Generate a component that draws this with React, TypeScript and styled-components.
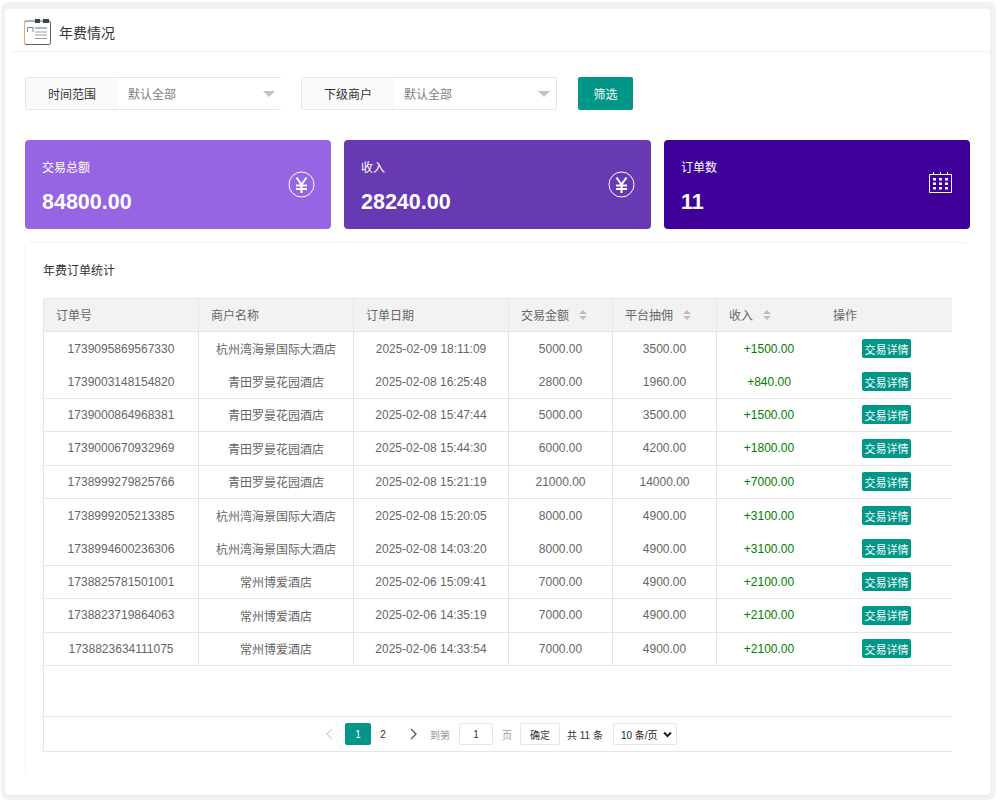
import React from "react";
import styled, { createGlobalStyle } from "styled-components";

const FONT_STACK = `"Liberation Sans", "Noto Sans CJK SC", sans-serif`;
const COLUMNS = "155px 155px 155px 104px 104px 104px 131px";

const GlobalStyle = createGlobalStyle`
  html, body {
    margin: 0;
    padding: 0;
    background: #ffffff;
    font-family: ${FONT_STACK};
  }
  * {
    box-sizing: border-box;
  }
`;

const Shell = styled.div`
  width: 995px;
  height: 798px;
  margin: 2px 0 0 1px;
  padding: 7px 6px 5px 4px;
  background: #f2f2f2;
  border-radius: 8px;
`;

const Panel = styled.div`
  height: 100%;
  padding: 0 0 0 7px;
  background: #ffffff;
  border-radius: 4px;
  box-shadow: 0 1px 2px rgba(0, 0, 0, 0.05);
`;

const PageHeader = styled.div`
  height: 43px;
  display: flex;
  align-items: center;
  gap: 8px;
  padding: 3px 0 0 12px;
  border-bottom: 1px solid #f2f2f2;
  font-size: 14px;
  color: #333333;
`;

const FilterBar = styled.div`
  display: flex;
  margin: 25px 0 0 13px;
  height: 33px;
`;

const FilterGroup = styled.div<{ $open?: boolean }>`
  width: 256px;
  height: 33px;
  display: flex;
  margin-right: 20px;
  border: 1px solid #e6e6e6;
  border-right-width: ${(p) => (p.$open ? "0" : "1px")};
  border-radius: 2px;
  font-size: 12px;
`;

const FilterLabel = styled.div`
  width: 92px;
  display: flex;
  align-items: center;
  justify-content: center;
  background: #fafafa;
  color: #333333;
`;

const FilterValue = styled.div`
  flex: 1;
  display: flex;
  align-items: center;
  justify-content: space-between;
  padding: 0 6px 0 10px;
  color: #808080;
`;

const Caret = styled.span`
  width: 0;
  height: 0;
  border-left: 6px solid transparent;
  border-right: 6px solid transparent;
  border-top: 6px solid #c2c2c2;
`;

const FilterButton = styled.button`
  width: 55px;
  height: 33px;
  margin-left: 1px;
  padding: 0;
  border: 0;
  border-radius: 2px;
  background: #009688;
  color: #ffffff;
  font-family: inherit;
  font-size: 12px;
`;

const CardRow = styled.div`
  display: grid;
  grid-template-columns: 306px 307px 306px;
  gap: 13px;
  margin: 30px 0 0 13px;
  width: 945px;
`;

const StatCard = styled.div<{ $bg: string }>`
  height: 89px;
  display: flex;
  align-items: center;
  justify-content: space-between;
  padding: 0 16px 0 17px;
  border-radius: 4px;
  background: ${(p) => p.$bg};
  color: #ffffff;
`;

const StatText = styled.div`
  display: flex;
  flex-direction: column;
  gap: 12px;
  padding-top: 5px;
`;

const StatLabel = styled.div`
  font-size: 12px;
  line-height: 18px;
`;

const StatValue = styled.div`
  font-size: 21.5px;
  line-height: 27px;
  font-weight: 700;
`;

const CalendarSlot = styled.span`
  display: flex;
  margin: 0 2px 4px 0;
`;

const TableCard = styled.div`
  width: 945px;
  height: 536px;
  margin: 13px 0 0 13px;
  padding: 0 0 0 17px;
  border: 1px solid #f2f2f2;
  border-right-color: transparent;
  border-bottom-color: transparent;
  border-radius: 6px;
`;

const TableTitle = styled.div`
  height: 55px;
  display: flex;
  align-items: center;
  font-size: 12px;
  padding-bottom: 3px;
  color: #333333;
`;

const TableFrame = styled.div`
  width: 909px;
  height: 454px;
  display: flex;
  flex-direction: column;
  border: 1px solid #e6e6e6;
  border-right: 0;
  font-size: 12px;
  color: #666666;
`;

const HeadRow = styled.div`
  height: 33px;
  display: grid;
  grid-template-columns: ${COLUMNS};
  flex: none;
  background: #f2f2f2;
  border-bottom: 1px solid #e6e6e6;
`;

const HeadCell = styled.div<{ $edge?: boolean }>`
  display: flex;
  align-items: center;
  gap: 10px;
  padding: 0 0 1px 12px;
  border-right: ${(p) => (p.$edge ? "1px solid #e6e6e6" : "0")};
`;

const SortMark = styled.span`
  display: inline-flex;
  flex-direction: column;
  gap: 2px;
  margin-top: 1px;

  &::before,
  &::after {
    content: "";
    width: 0;
    height: 0;
    border-left: 4px solid transparent;
    border-right: 4px solid transparent;
  }
  &::before {
    border-bottom: 4px solid #bdbdbd;
  }
  &::after {
    border-top: 4px solid #bdbdbd;
  }
`;

const TableBody = styled.div`
  flex: 1;
  border-bottom: 1px solid #e6e6e6;
`;

const BodyRow = styled.div<{ $plain?: boolean }>`
  height: 33.4px;
  display: grid;
  grid-template-columns: ${COLUMNS};
  border-bottom: ${(p) => (p.$plain ? "0" : "1px solid #e6e6e6")};
`;

const BodyCell = styled.div<{ $edge?: boolean; $income?: boolean }>`
  display: flex;
  align-items: center;
  justify-content: center;
  border-right: ${(p) => (p.$edge ? "1px solid #e6e6e6" : "0")};
  color: ${(p) => (p.$income ? "#008000" : "#666666")};
`;

const DetailButton = styled.span`
  width: 49px;
  height: 19px;
  display: flex;
  align-items: center;
  justify-content: center;
  border-radius: 2px;
  background: #009688;
  color: #ffffff;
  font-size: 11px;
`;

const Pager = styled.div`
  height: 34px;
  flex: none;
  display: flex;
  align-items: center;
  padding-left: 281px;
  color: #333333;
  font-size: 10px;
  white-space: nowrap;
`;

const PrevArrow = styled.span`
  display: flex;
  width: 20px;
  color: #d2d2d2;
`;

const NextArrow = styled.span`
  display: flex;
  width: 35px;
  padding-left: 15px;
  color: #555555;
`;

const PageNumber = styled.span<{ $active?: boolean }>`
  width: ${(p) => (p.$active ? "26px" : "24px")};
  height: 22px;
  display: flex;
  align-items: center;
  justify-content: center;
  border-radius: 2px;
  background: ${(p) => (p.$active ? "#009688" : "transparent")};
  color: ${(p) => (p.$active ? "#ffffff" : "#333333")};
`;

const PagerHint = styled.span<{ $l?: number; $r?: number }>`
  margin: 0 ${(p) => p.$r ?? 0}px 0 ${(p) => p.$l ?? 0}px;
  color: #999999;
`;

const PagerBox = styled.span<{ $w: number; $l?: number }>`
  width: ${(p) => p.$w}px;
  height: 22px;
  margin-left: ${(p) => p.$l ?? 0}px;
  display: flex;
  align-items: center;
  justify-content: center;
  border: 1px solid #e6e6e6;
  border-radius: 2px;
  color: #333333;
`;

const PagerTotal = styled.span`
  margin-left: 7px;
`;

const PagerSelect = styled.span`
  width: 64px;
  height: 22px;
  margin-left: 10px;
  display: flex;
  align-items: center;
  justify-content: space-between;
  padding: 0 4px 0 7px;
  border: 1px solid #e6e6e6;
  border-radius: 2px;
  color: #222222;
`;

type Order = {
  id: string;
  shop: string;
  date: string;
  amount: string;
  fee: string;
  income: string;
  plain?: boolean;
};

const HANGZHOU = "杭州湾海景国际大酒店";
const QINGTIAN = "青田罗曼花园酒店";
const CHANGZHOU = "常州博爱酒店";

const orders: Order[] = [
  { id: "1739095869567330", shop: HANGZHOU, date: "2025-02-09 18:11:09", amount: "5000.00", fee: "3500.00", income: "+1500.00", plain: true },
  { id: "1739003148154820", shop: QINGTIAN, date: "2025-02-08 16:25:48", amount: "2800.00", fee: "1960.00", income: "+840.00" },
  { id: "1739000864968381", shop: QINGTIAN, date: "2025-02-08 15:47:44", amount: "5000.00", fee: "3500.00", income: "+1500.00" },
  { id: "1739000670932969", shop: QINGTIAN, date: "2025-02-08 15:44:30", amount: "6000.00", fee: "4200.00", income: "+1800.00" },
  { id: "1738999279825766", shop: QINGTIAN, date: "2025-02-08 15:21:19", amount: "21000.00", fee: "14000.00", income: "+7000.00" },
  { id: "1738999205213385", shop: HANGZHOU, date: "2025-02-08 15:20:05", amount: "8000.00", fee: "4900.00", income: "+3100.00", plain: true },
  { id: "1738994600236306", shop: HANGZHOU, date: "2025-02-08 14:03:20", amount: "8000.00", fee: "4900.00", income: "+3100.00" },
  { id: "1738825781501001", shop: CHANGZHOU, date: "2025-02-06 15:09:41", amount: "7000.00", fee: "4900.00", income: "+2100.00" },
  { id: "1738823719864063", shop: CHANGZHOU, date: "2025-02-06 14:35:19", amount: "7000.00", fee: "4900.00", income: "+2100.00" },
  { id: "1738823634111075", shop: CHANGZHOU, date: "2025-02-06 14:33:54", amount: "7000.00", fee: "4900.00", income: "+2100.00" },
];

function NotebookIcon() {
  return (
    <svg width="27" height="26" viewBox="0 0 27 26" fill="none">
      <rect x=".5" y="2" width="26" height="23.5" rx="1.5" fill="#fff" stroke="#5b6675" />
      <path d="M.5 3v22" stroke="#e6ac62" />
      <path d="M11 0h5v4h-5zM19 0h6v4h-6z" fill="#3c4450" />
      <path d="M3.5 13V8.5h5.5V13" stroke="#6f8296" />
      <path d="M11 9h12" stroke="#6b6f75" />
      <path d="M11 13h12M11 16h12M11 19.5h12" stroke="#9a9da2" />
    </svg>
  );
}

function YenIcon() {
  return (
    <svg width="27" height="27" viewBox="0 0 27 27" fill="none" stroke="#fff">
      <circle cx="13.5" cy="13.5" r="12.5" />
      <path d="M8.5 6.5l5 7 5-7M8 14.5h11M8 18h11M13.5 13.5V22" strokeWidth="2" />
    </svg>
  );
}

function CalendarIcon() {
  const cols = [4, 10, 16];
  const rows = [6, 10.5, 15];
  return (
    <svg width="23" height="21" viewBox="0 0 23 21" fill="none">
      <path d="M.5 2.5h22v18H.5z" stroke="#fff" />
      <path d="M4.5 0v3M11.5 0v3M18.5 0v3" stroke="#fff" />
      {rows.map((y) =>
        cols.map((x) => <rect key={`${x}-${y}`} x={x} y={y} width="3" height="2.5" fill="#fff" />)
      )}
    </svg>
  );
}

function Chevron({ left }: { left?: boolean }) {
  return (
    <svg width="8" height="12" viewBox="0 0 8 12" fill="none" stroke="currentColor" strokeWidth="1.3">
      <path d={left ? "M7 1L2 6l5 5" : "M1 1l5 5-5 5"} />
    </svg>
  );
}

function SelectChevron() {
  return (
    <svg width="9" height="7" viewBox="0 0 9 7" fill="none" stroke="#222" strokeWidth="2">
      <path d="M1 1.5l3.5 3.5L8 1.5" />
    </svg>
  );
}

export default function App() {
  return (
    <>
      <GlobalStyle />
      <Shell>
        <Panel>
          <PageHeader>
            <NotebookIcon />
            年费情况
          </PageHeader>

          <FilterBar>
            <FilterGroup $open>
              <FilterLabel>时间范围</FilterLabel>
              <FilterValue>
                默认全部
                <Caret />
              </FilterValue>
            </FilterGroup>
            <FilterGroup>
              <FilterLabel>下级商户</FilterLabel>
              <FilterValue>
                默认全部
                <Caret />
              </FilterValue>
            </FilterGroup>
            <FilterButton>筛选</FilterButton>
          </FilterBar>

          <CardRow>
            <StatCard $bg="#9665e3">
              <StatText>
                <StatLabel>交易总额</StatLabel>
                <StatValue>84800.00</StatValue>
              </StatText>
              <YenIcon />
            </StatCard>
            <StatCard $bg="#673ab4">
              <StatText>
                <StatLabel>收入</StatLabel>
                <StatValue>28240.00</StatValue>
              </StatText>
              <YenIcon />
            </StatCard>
            <StatCard $bg="#3f0099">
              <StatText>
                <StatLabel>订单数</StatLabel>
                <StatValue>11</StatValue>
              </StatText>
              <CalendarSlot>
                <CalendarIcon />
              </CalendarSlot>
            </StatCard>
          </CardRow>

          <TableCard>
            <TableTitle>年费订单统计</TableTitle>
            <TableFrame>
              <HeadRow>
                <HeadCell $edge>订单号</HeadCell>
                <HeadCell $edge>商户名称</HeadCell>
                <HeadCell $edge>订单日期</HeadCell>
                <HeadCell $edge>
                  交易金额
                  <SortMark />
                </HeadCell>
                <HeadCell $edge>
                  平台抽佣
                  <SortMark />
                </HeadCell>
                <HeadCell>
                  收入
                  <SortMark />
                </HeadCell>
                <HeadCell>操作</HeadCell>
              </HeadRow>
              <TableBody>
                {orders.map((o) => (
                  <BodyRow key={o.id} $plain={o.plain}>
                    <BodyCell $edge>{o.id}</BodyCell>
                    <BodyCell $edge>{o.shop}</BodyCell>
                    <BodyCell $edge>{o.date}</BodyCell>
                    <BodyCell $edge>{o.amount}</BodyCell>
                    <BodyCell $edge>{o.fee}</BodyCell>
                    <BodyCell $income>{o.income}</BodyCell>
                    <BodyCell>
                      <DetailButton>交易详情</DetailButton>
                    </BodyCell>
                  </BodyRow>
                ))}
              </TableBody>
              <Pager>
                <PrevArrow>
                  <Chevron left />
                </PrevArrow>
                <PageNumber $active>1</PageNumber>
                <PageNumber>2</PageNumber>
                <NextArrow>
                  <Chevron />
                </NextArrow>
                <PagerHint>到第</PagerHint>
                <PagerBox $w={34} $l={9}>
                  1
                </PagerBox>
                <PagerHint $l={9} $r={8}>
                  页
                </PagerHint>
                <PagerBox $w={40}>确定</PagerBox>
                <PagerTotal>共 11 条</PagerTotal>
                <PagerSelect>
                  10 条/页
                  <SelectChevron />
                </PagerSelect>
              </Pager>
            </TableFrame>
          </TableCard>
        </Panel>
      </Shell>
    </>
  );
}
